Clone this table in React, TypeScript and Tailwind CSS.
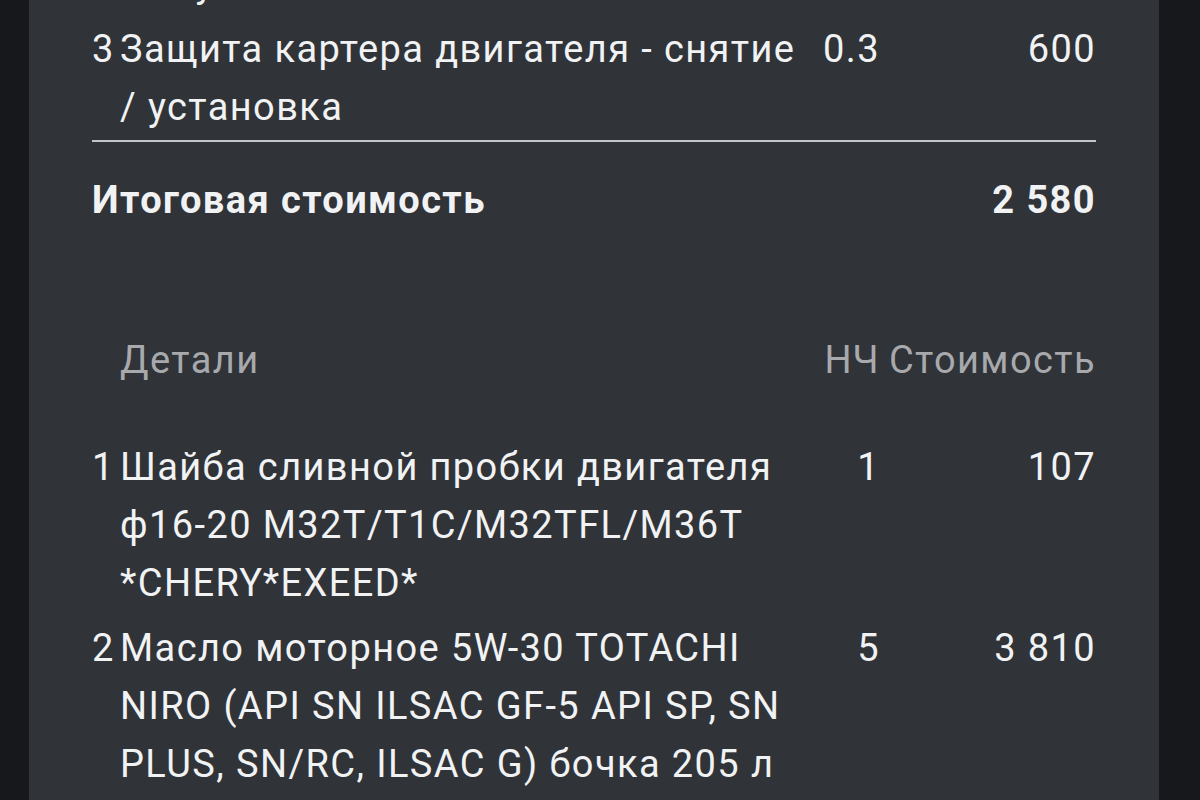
const works = [
  { n: 2, name: "Замена масла в двигателе\nбез учёта", hours: "0.5", cost: "800" },
  { n: 3, name: "Защита картера двигателя - снятие / установка", hours: "0.3", cost: "600" },
];

const parts = [
  {
    n: 1,
    name: "Шайба сливной пробки двигателя ф16-20 M32T/T1C/M32TFL/M36T *CHERY*EXEED*",
    hours: "1",
    cost: "107",
  },
  {
    n: 2,
    name: "Масло моторное 5W-30 TOTACHI NIRO (API SN ILSAC GF-5 API SP, SN PLUS, SN/RC, ILSAC G) бочка 205 л",
    hours: "5",
    cost: "3 810",
  },
];

type Row = { n: number; name: string; hours: string; cost: string };

const Line = ({ row }: { row: Row }) => (
  <div className="grid grid-cols-[28px_685px_75px_216px] pt-[7px]">
    <span>{row.n}</span>
    <span className="whitespace-pre-line">{row.name}</span>
    <span className="text-right">{row.hours}</span>
    <span className="text-right">{row.cost}</span>
  </div>
);

export default function App() {
  return (
    <div className="h-[800px] overflow-hidden bg-[#16181b] font-['Roboto',sans-serif]">
      <div className="ml-[29px] w-[1130px] h-full overflow-hidden bg-[#303338] px-[63px] text-[38px] leading-[58px] tracking-[1.4px] text-[#f1f2f3]">
        {/* tail of the works list */}
        <div className="-mt-[110px] pb-[4px] border-b-2 border-[#c3c5c8]">
          {works.map((w) => (
            <Line key={w.n} row={w} />
          ))}
        </div>

        <div className="flex justify-between pt-[29px] font-bold">
          <span>Итоговая стоимость</span>
          <span>2 580</span>
        </div>

        {/* parts */}
        <div className="mt-[102px] grid grid-cols-[28px_685px_75px_216px] text-[#a7a9ac]">
          <span />
          <span>Детали</span>
          <span className="text-right">НЧ</span>
          <span className="text-right">Стоимость</span>
        </div>
        <div className="mt-[42px]">
          {parts.map((p) => (
            <Line key={p.n} row={p} />
          ))}
        </div>
      </div>
    </div>
  );
}
